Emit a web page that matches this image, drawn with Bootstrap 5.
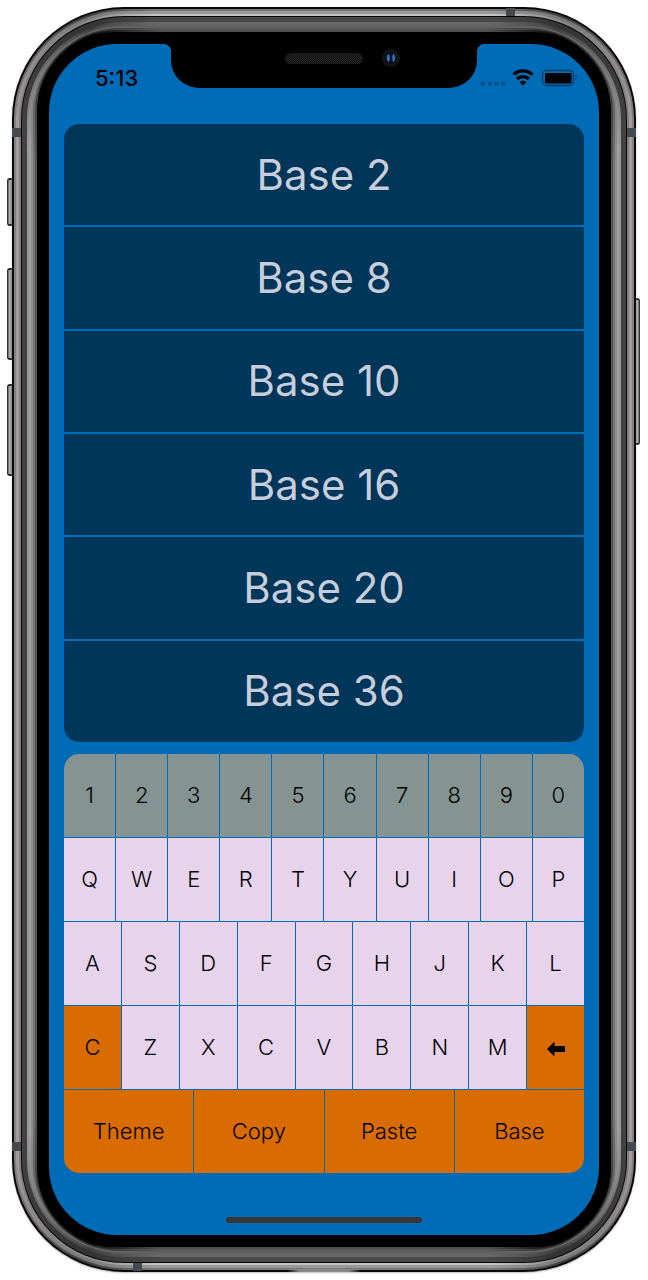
<!DOCTYPE html>
<html lang="en">
<head>
<meta charset="utf-8">
<meta name="viewport" content="width=device-width, initial-scale=1">
<title>Base converter</title>
<link href="https://cdn.jsdelivr.net/npm/bootstrap@5.3.0/dist/css/bootstrap.min.css" rel="stylesheet">
<style>
  body { font-family: Inter, Roboto, sans-serif; color: #000; background: #fff; }
  .stage { padding: 7px 12px 6px; }

  /* Metal and glass rings, lit differently on sides, ends and corners */
  .ring {
    background: conic-gradient(var(--end) 0 15deg, var(--corner) 21deg, var(--side) 31deg 149deg, var(--corner) 159deg, var(--end) 165deg 195deg, var(--corner) 201deg, var(--side) 211deg 329deg, var(--corner) 339deg, var(--end) 345deg);
    padding: 2px;
  }
  .r-edge { background: #0a0a0a; border-radius: 112px; padding: 2px; box-shadow: 0 1px 2px #bbb; }
  .r-steel-a { --side: #858183; --end: #777; --corner: #3c3c3c; border-radius: 110px; }
  .r-steel-b { --side: #a09c9e; --end: #999; --corner: #777; border-radius: 108px; padding: 3px; }
  .r-steel-c { --side: #827e80; --end: #c4c4c4; --corner: #8a8a8a; border-radius: 105px; }
  .r-seam { background: #080808; border-radius: 103px; padding: 1px; }
  .r-lip { --side: #424242; --end: #484848; --corner: #333; border-radius: 102px; padding: 5px; }
  .r-bev-a { --side: #989898; --end: #696969; --corner: #3e3e3e; border-radius: 97px; }
  .r-bev-b { --side: #a2a0a1; --end: #666; --corner: #484848; border-radius: 95px; }
  .r-bev-c { --side: #8b8b8b; --end: #606060; --corner: #666; border-radius: 91px; }
  .r-bev-d { --side: #737373; --end: #595959; --corner: #303030; border-radius: 87px; }
  .r-bev-e { --side: #555; --end: #505050; --corner: #0c0c0c; border-radius: 83px; }
  .r-glass { background: #000; border-radius: 79px; padding: 12px; }

  .screen { background: #006cb7; border-radius: 68px; overflow: hidden; padding: 0 15px 12px; }
  .statusbar { height: 80px; padding: 0 5px 12px 31px; font-size: 22px; font-weight: 500; }
  .notch { width: 306px; height: 44px; background: #000; border-radius: 0 0 28px 28px; top: 0; left: 50%; transform: translateX(-50%); }
  .notch::before, .notch::after { content: ""; position: absolute; top: 0; width: 8px; height: 8px; }
  .notch::before { right: 100%; background: radial-gradient(circle at 0 100%, transparent 8px, #000 8px); }
  .notch::after { left: 100%; background: radial-gradient(circle at 100% 100%, transparent 8px, #000 8px); }
  .speaker { width: 78px; height: 11px; border-radius: 6px; background: repeating-conic-gradient(#111 0 25%, #262626 0 50%) 0 0 / 2px 2px; top: 9px; left: 114px; }
  .lens { width: 18px; height: 18px; top: 5px; left: 211px; }

  .bases { min-height: 618px; gap: 2px; border-radius: 15px; overflow: hidden; margin: 0 0 12px; padding: 0; list-style: none; }
  .bases li { flex: 1 1 0; background: #003659; color: #c5cfdc; font-size: 42px; line-height: 1; text-shadow: 0 0 1px #001040; }

  .keys { min-height: 419px; gap: 1px; border-radius: 15px; overflow: hidden; }
  .keyrow { flex: 1 1 0; gap: 1px; }
  .key { flex: 1 1 0; min-width: 0; border: 0; padding: 0; background: #e7d4ec; color: #000; font-size: 22px; font-weight: 300; }
  .key-num { background: #859493; }
  .key-cmd { background: #d96c00; }

  .homebar { width: 196px; height: 6px; border-radius: 3px; background: #3a3633; margin: 44px auto 0; }

  .hw { position: absolute; background: linear-gradient(90deg, #333 1px, #b4b4b4 2px, #999 4px, #333); border: solid #222; border-width: 2px 0; }
  .hw-l { left: -5px; width: 6px; border-radius: 3px 0 0 3px; }
  .hw-r { right: -4px; width: 5px; border-radius: 3px 0 0 3px; transform: scaleX(-1); }
  .band { position: absolute; background: #45484d; }
  .band-h { width: 9px; height: 9px; }
  .band-v { width: 9px; height: 8px; }
  .lip { position: absolute; bottom: 0; left: 50%; width: 74px; height: 3px; transform: translateX(-50%); background: linear-gradient(90deg, transparent, #888 12px calc(100% - 12px), transparent); }
</style>
</head>
<body>
<main class="stage">
<div class="position-relative">
  <span class="hw hw-l" style="top:171px;height:48px"></span>
  <span class="hw hw-l" style="top:261px;height:92px"></span>
  <span class="hw hw-l" style="top:377px;height:92px"></span>
  <span class="hw hw-r" style="top:291px;height:147px"></span>
  <div class="r-edge position-relative">
  <div class="ring r-steel-a"><div class="ring r-steel-b"><div class="ring r-steel-c">
  <div class="r-seam"><div class="ring r-lip">
  <div class="ring r-bev-a"><div class="ring r-bev-b"><div class="ring r-bev-c"><div class="ring r-bev-d"><div class="ring r-bev-e">
  <div class="r-glass">
    <div class="screen position-relative">
      <header class="statusbar d-flex align-items-center justify-content-between">
        <span>5:13</span>
        <svg width="100" height="20" viewBox="0 0 100 20" aria-label="Wi-Fi on, battery full">
          <g fill="#00508a"><circle cx="4" cy="15.500" r="2.300"/><circle cx="11" cy="15.500" r="2.300"/><circle cx="17.500" cy="15.500" r="2.300"/><circle cx="24" cy="15.500" r="2.300"/></g>
          <g fill="none" stroke="#000" stroke-width="3.200"><path d="M34.500 6.700a13.500 13.500 0 0 1 19 0"/><path d="M38 11a8.800 8.800 0 0 1 12 0"/></g>
          <path d="M44 17.500l-3.300-3.300a4.700 4.700 0 0 1 6.600 0z"/>
          <rect x="63.500" y="2.500" width="31" height="15" rx="4" fill="none" stroke="#003c6e" stroke-width="1.300"/>
          <rect x="66" y="5" width="26.500" height="10.500" rx="1"/>
          <path d="M96.500 7.500a3 3 0 0 1 0 5z" fill="#003c6e"/>
        </svg>
      </header>
      <div class="notch position-absolute">
        <span class="speaker position-absolute"></span>
        <svg class="lens position-absolute" viewBox="0 0 18 18" aria-hidden="true"><circle cx="9" cy="9" r="9" fill="#111316"/><circle cx="9" cy="9" r="6" fill="#0b1020"/><path d="M6.800 4.500a6 6 0 0 0 0 9 11 11 0 0 0 0-9zM11.200 4.500a6 6 0 0 1 0 9 11 11 0 0 1 0-9z" fill="#3573ad"/></svg>
      </div>

      <ul class="bases d-flex flex-column">
        <li class="d-flex align-items-center justify-content-center">Base 2</li>
        <li class="d-flex align-items-center justify-content-center">Base 8</li>
        <li class="d-flex align-items-center justify-content-center">Base 10</li>
        <li class="d-flex align-items-center justify-content-center">Base 16</li>
        <li class="d-flex align-items-center justify-content-center">Base 20</li>
        <li class="d-flex align-items-center justify-content-center">Base 36</li>
      </ul>

      <div class="keys d-flex flex-column">
        <div class="keyrow d-flex">
          <button class="key key-num">1</button><button class="key key-num">2</button><button class="key key-num">3</button><button class="key key-num">4</button><button class="key key-num">5</button><button class="key key-num">6</button><button class="key key-num">7</button><button class="key key-num">8</button><button class="key key-num">9</button><button class="key key-num">0</button>
        </div>
        <div class="keyrow d-flex">
          <button class="key">Q</button><button class="key">W</button><button class="key">E</button><button class="key">R</button><button class="key">T</button><button class="key">Y</button><button class="key">U</button><button class="key">I</button><button class="key">O</button><button class="key">P</button>
        </div>
        <div class="keyrow d-flex">
          <button class="key">A</button><button class="key">S</button><button class="key">D</button><button class="key">F</button><button class="key">G</button><button class="key">H</button><button class="key">J</button><button class="key">K</button><button class="key">L</button>
        </div>
        <div class="keyrow d-flex">
          <button class="key key-cmd">C</button><button class="key">Z</button><button class="key">X</button><button class="key">C</button><button class="key">V</button><button class="key">B</button><button class="key">N</button><button class="key">M</button><button class="key key-cmd" aria-label="Delete"><svg width="20" height="16" viewBox="0 0 20 16" aria-hidden="true"><path d="M1 8l7.500-7.500v4.500H19v6H8.500v4.500z"/></svg></button>
        </div>
        <div class="keyrow d-flex">
          <button class="key key-cmd">Theme</button><button class="key key-cmd">Copy</button><button class="key key-cmd">Paste</button><button class="key key-cmd">Base</button>
        </div>
      </div>
      <div class="homebar"></div>
    </div>
  </div>
  </div></div></div></div></div>
  </div></div>
  </div></div></div>
  <span class="band band-h" style="left:0;top:121px"></span>
  <span class="band band-h" style="right:0;top:121px"></span>
  <span class="band band-h" style="left:0;bottom:121px"></span>
  <span class="band band-h" style="right:0;bottom:121px"></span>
  <span class="band band-v" style="right:121px;top:1px"></span>
  <span class="band band-v" style="left:121px;bottom:1px"></span>
  <span class="lip"></span>
  </div>
</div>
</main>
<script src="https://cdn.jsdelivr.net/npm/bootstrap@5.3.0/dist/js/bootstrap.bundle.min.js"></script>
</body>
</html>
